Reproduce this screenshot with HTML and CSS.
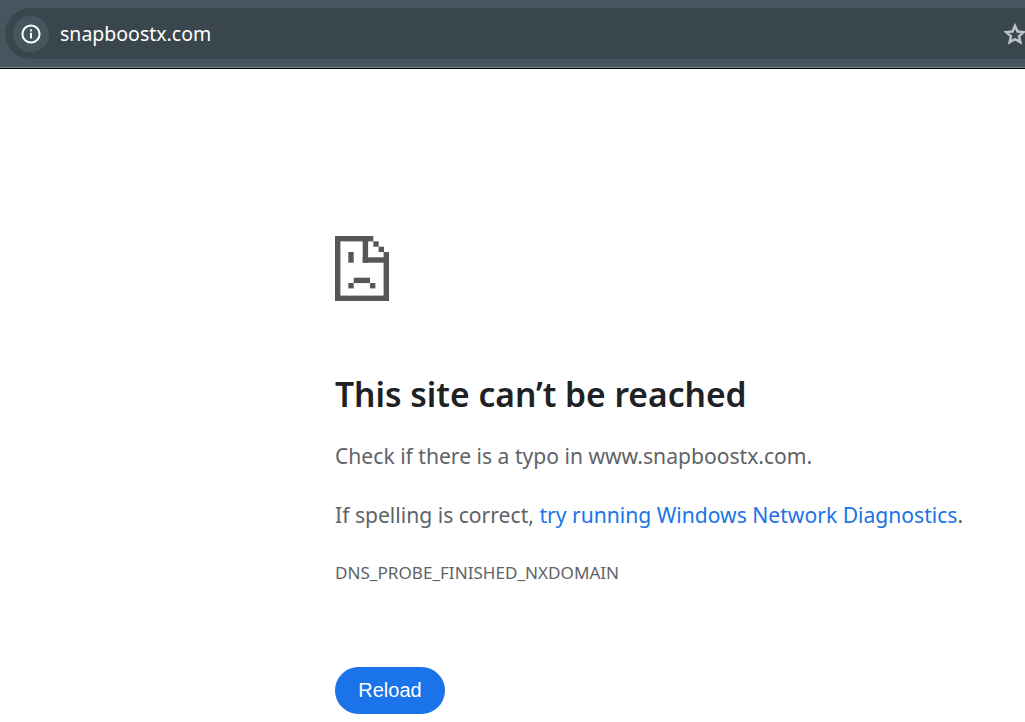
FILE: index.html
```html
<html>
  <head>
    <title>snapboostx.com</title>
    <link rel="stylesheet" href="styles.css">
  </head>
  <body>
    <div class="toolbar">
      <div class="omnibox">
        <div class="chip">
          <svg class="info" viewBox="0 0 20 20" width="20" height="20">
            <circle cx="10" cy="10" r="8.6" fill="none" stroke="#fff" stroke-width="2"/>
            <rect x="9" y="8.8" width="2" height="5.6" fill="#fff"/>
            <rect x="9" y="5.4" width="2" height="2" fill="#fff"/>
          </svg>
        </div>
        <div class="url">snapboostx.com</div>
        <svg class="star" viewBox="0 0 24 24" width="24" height="24">
          <path d="M12 3.8l2.5 5.7 6.2.6-4.7 4.1 1.4 6.1L12 17.1l-5.4 3.2 1.4-6.1-4.7-4.1 6.2-.6z" fill="none" stroke="#bcc3c7" stroke-width="2.5"/>
        </svg>
      </div>
    </div>
    <div class="main">
      <svg class="sad-tab" viewBox="0 0 54 65" width="54" height="65">
        <g fill="#575757">
          <rect x="0" y="0" width="5.4" height="65"/>
          <rect x="0" y="0" width="38.3" height="5.4"/>
          <rect x="27.7" y="0" width="5.4" height="26.7"/>
          <rect x="27.7" y="21.3" width="26.3" height="5.4"/>
          <rect x="38.3" y="5.3" width="5.4" height="5.4"/>
          <rect x="43.6" y="10.7" width="5.4" height="5.4"/>
          <rect x="48.6" y="16" width="5.4" height="49"/>
          <rect x="0" y="59.6" width="54" height="5.4"/>
          <rect x="13.3" y="16" width="5.4" height="10.7"/>
          <rect x="18.7" y="41.7" width="16.3" height="5.4"/>
          <rect x="13.3" y="47" width="5.4" height="5.4"/>
          <rect x="35" y="47" width="5.4" height="5.4"/>
        </g>
      </svg>
      <h1>This site can’t be reached</h1>
      <p class="summary">Check if there is a typo in www.snapboostx.com.</p>
      <p class="summary">If spelling is correct, <a href="#">try running Windows Network Diagnostics</a>.</p>
      <div class="error-code">DNS_PROBE_FINISHED_NXDOMAIN</div>
      <button class="reload">Reload</button>
    </div>
  </body>
</html>
```
FILE: styles.css
```css
html, body {
  height: 100%;
}
body {
  margin: 0;
  background: #fff;
  font-family: "Noto Sans", sans-serif;
  overflow: hidden;
}
.toolbar {
  height: 60px;
  padding: 8px 0 0 5px;
  background: #46565f;
  border-bottom: 1px solid #000;
  box-shadow: inset 0 -1px #7d8a91;
}
.omnibox {
  display: flex;
  align-items: center;
  height: 51px;
  padding-left: 8px;
  background: #3a464d;
  border-radius: 26px 0 0 26px;
}
.chip {
  display: flex;
  align-items: center;
  justify-content: center;
  width: 36px;
  height: 36px;
  border-radius: 50%;
  background: #46565f;
}
.url {
  margin-left: 11px;
  color: #fff;
  font-size: 19.5px;
}
.star {
  margin-left: auto;
  margin-right: -2px;
}
.main {
  padding: 167px 0 0 335px;
  color: #5f6368;
}
.sad-tab {
  display: block;
}
h1 {
  margin: 71px 0 0;
  color: #202124;
  font-size: 33.6px;
  font-weight: 600;
  line-height: 44px;
}
.summary {
  margin: 23px 0 0;
  font-size: 21.1px;
  line-height: 34px;
  white-space: nowrap;
}
.summary + .summary {
  margin-top: 25px;
}
a {
  color: #1a73e8;
  text-decoration: none;
}
.error-code {
  margin-top: 30px;
  font-size: 17.1px;
  line-height: 22px;
}
.reload {
  display: block;
  width: 110px;
  height: 47px;
  margin-top: 83px;
  padding: 0;
  border: 0;
  border-radius: 24px;
  background: #1a73e8;
  color: #fff;
  font-family: "Liberation Sans", sans-serif;
  font-size: 20px;
}
```
